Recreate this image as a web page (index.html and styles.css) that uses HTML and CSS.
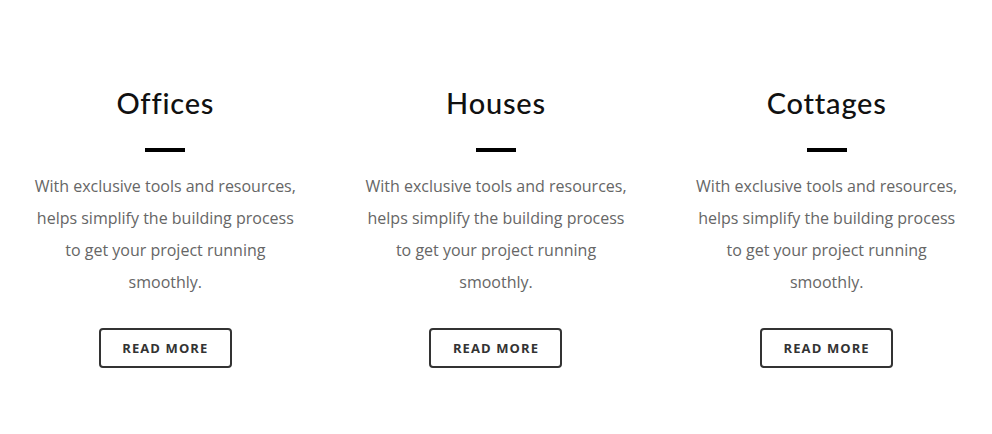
FILE: index.html
```html
<!DOCTYPE html>
<html lang="en">
<head>
    <meta charset="UTF-8">
    <meta name="viewport" content="width=device-width, initial-scale=1.0">
    <title>Services</title>
    <link rel="stylesheet" href="styles.css">
</head>
<body>
    <section class="services">
        <div class="service">
            <h2 class="service-title">Offices</h2>
            <span class="service-bar"></span>
            <p class="service-text">With exclusive tools and resources, helps simplify the building process to get your project running smoothly.</p>
            <a href="#" class="service-btn">Read more</a>
        </div>
        <div class="service">
            <h2 class="service-title">Houses</h2>
            <span class="service-bar"></span>
            <p class="service-text">With exclusive tools and resources, helps simplify the building process to get your project running smoothly.</p>
            <a href="#" class="service-btn">Read more</a>
        </div>
        <div class="service">
            <h2 class="service-title">Cottages</h2>
            <span class="service-bar"></span>
            <p class="service-text">With exclusive tools and resources, helps simplify the building process to get your project running smoothly.</p>
            <a href="#" class="service-btn">Read more</a>
        </div>
    </section>
</body>
</html>
```

FILE: styles.css
```css
body{
  margin:0;
  background:#fff;
  font-family:"Open Sans", "Liberation Sans", sans-serif;
}

.services{
  display:grid;
  grid-template-columns:repeat(3, 1fr);
  padding-top:84px;
}

.service{
  display:flex;
  flex-direction:column;
  align-items:center;
  padding:0 30px;
  text-align:center;
}

.service-title{
  margin:0;
  font-family:Lato, "Noto Sans", sans-serif;
  font-weight:500;
  font-size:29px;
  line-height:38px;
  letter-spacing:0.8px;
  color:#111;
}

.service-bar{
  display:block;
  width:40px;
  height:4px;
  background:#000;
  margin-top:26px;
}

.service-text{
  margin:18px 0 0;
  font-size:16px;
  line-height:32px;
  color:#666;
}

.service-btn{
  margin-top:30px;
  display:inline-block;
  box-sizing:border-box;
  width:133px;
  height:40px;
  line-height:36px;
  border:2px solid #333;
  border-radius:4px;
  font-size:13px;
  font-weight:700;
  letter-spacing:1.1px;
  text-transform:uppercase;
  text-decoration:none;
  color:#333;
}
```
